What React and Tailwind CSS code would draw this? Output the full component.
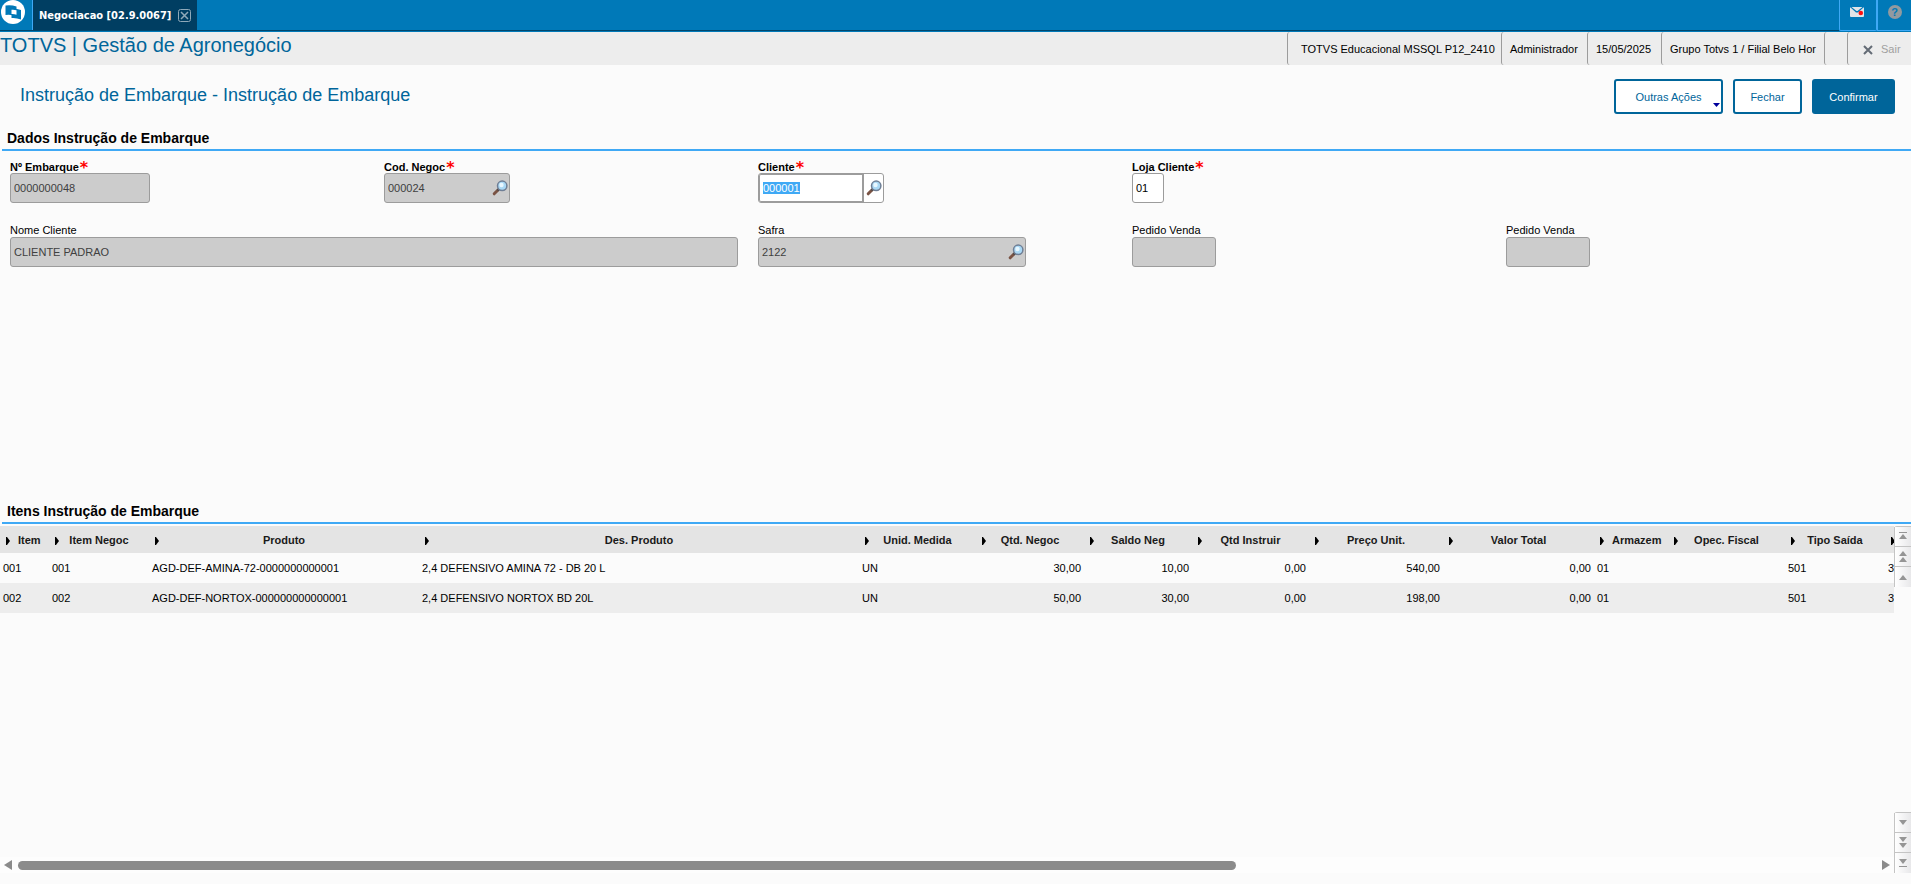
import React from 'react';
import clsx from 'clsx';

const columns = [
  { key: 'item', label: 'Item', width: 49, left: true },
  { key: 'itemNegoc', label: 'Item Negoc', width: 100 },
  { key: 'produto', label: 'Produto', width: 270 },
  { key: 'descricao', label: 'Des. Produto', width: 440 },
  { key: 'unidade', label: 'Unid. Medida', width: 117 },
  { key: 'qtdNegoc', label: 'Qtd. Negoc', width: 108, number: true },
  { key: 'saldo', label: 'Saldo Neg', width: 108, number: true },
  { key: 'qtdInstruir', label: 'Qtd Instruir', width: 117, number: true },
  { key: 'preco', label: 'Preço Unit.', width: 134, number: true },
  { key: 'total', label: 'Valor Total', width: 151, number: true },
  { key: 'armazem', label: 'Armazem', width: 74, left: true },
  { key: 'operacao', label: 'Opec. Fiscal', width: 117 },
  { key: 'tipoSaida', label: 'Tipo Saída', width: 100 },
  { key: 'extra', label: '', width: 60 }
];

const rows = [
  {
    item: '001',
    itemNegoc: '001',
    produto: 'AGD-DEF-AMINA-72-0000000000001',
    descricao: '2,4 DEFENSIVO AMINA 72 - DB 20 L',
    unidade: 'UN',
    qtdNegoc: '30,00',
    saldo: '10,00',
    qtdInstruir: '0,00',
    preco: '540,00',
    total: '0,00',
    armazem: '01',
    operacao: '',
    tipoSaida: '501',
    extra: '3'
  },
  {
    item: '002',
    itemNegoc: '002',
    produto: 'AGD-DEF-NORTOX-000000000000001',
    descricao: '2,4 DEFENSIVO NORTOX BD 20L',
    unidade: 'UN',
    qtdNegoc: '50,00',
    saldo: '30,00',
    qtdInstruir: '0,00',
    preco: '198,00',
    total: '0,00',
    armazem: '01',
    operacao: '',
    tipoSaida: '501',
    extra: '3'
  }
];

const Logo = () => (
  <svg width="24" height="24" viewBox="0 0 24 24" aria-hidden="true">
    <circle cx="12" cy="12" r="12" fill="#fff" />
    <path d="M4.500 5.500Q10 4.500 15.500 6.500V16.500Q10 14 4.500 15z" fill="#0079b8" />
    <path d="M10.500 8.500Q15 8 20 10V19.500Q15 17.500 10.500 18z" fill="#0079b8" />
    <path d="M10.500 9.800Q13 9.500 15.500 10.300V14.700Q13 13.800 10.500 14z" fill="#fff" />
  </svg>
);

const SearchIcon = () => (
  <svg width="16" height="16" viewBox="0 0 16 16" aria-hidden="true">
    <path d="M6.500 9.500 2.200 13.800" stroke="#7a5344" strokeWidth="3" strokeLinecap="round" />
    <path d="M7 9 5.500 10.500" stroke="#4a4a4a" strokeWidth="2" />
    <circle cx="10.200" cy="5.800" r="4.700" fill="#a9d8f5" stroke="#6f7f96" strokeWidth="1.500" />
    <circle cx="9.500" cy="5" r="2.200" fill="#e8f7ff" />
  </svg>
);

const Required = () => (
  <span className="ml-px h-4 font-['DejaVu_Sans',sans-serif] text-base leading-4 text-[#ff0000]">*</span>
);

const Field = ({ id, label, value = '', required, disabled, search, width, className }) => (
  <div className={clsx('flex flex-col items-start pr-5', className)}>
    <label
      htmlFor={id}
      className={clsx(
        'flex h-[13px] items-center whitespace-nowrap',
        required && 'pt-[2px] font-bold'
      )}
    >
      {label}
      {required && <Required />}
    </label>
    <div
      className={clsx(
        'flex h-[30px] items-center rounded-[3px] border border-[#9c9c9c]',
        disabled ? 'bg-[#cccccc]' : 'bg-white',
        width
      )}
    >
      <input
        id={id}
        type="text"
        defaultValue={value}
        readOnly={disabled}
        className={clsx(
          'h-full w-full min-w-0 bg-transparent px-[3px] outline-none',
          disabled ? 'text-[#404040]' : 'text-black'
        )}
      />
      {search && (
        <button type="button" aria-label={`Pesquisar ${label}`} className="shrink-0 pr-px">
          <SearchIcon />
        </button>
      )}
    </div>
  </div>
);

// The customer code has the focus, with its whole value selected
const ClienteField = () => {
  const input = React.useRef(null);

  React.useEffect(() => {
    input.current.focus();
    input.current.select();
  }, []);

  return (
    <div className="flex flex-col items-start pr-5">
      <label htmlFor="cliente" className="flex h-[13px] items-center pt-[2px] font-bold">
        Cliente
        <Required />
      </label>
      <div className="flex h-[30px] w-[126px] items-center rounded-[3px] border border-[#9c9c9c] bg-white">
        <input
          id="cliente"
          ref={input}
          type="text"
          defaultValue="000001"
          className="h-full w-[105px] rounded-l-[2px] border border-r-2 border-[#9c9c9c] px-[3px] outline-none selection:bg-[#3fa9f5] selection:text-white"
        />
        <button type="button" aria-label="Pesquisar Cliente" className="flex flex-1 justify-center">
          <SearchIcon />
        </button>
      </div>
    </div>
  );
};

const SectionTitle = ({ children }) => (
  <h2 className="ml-[2px] h-[25px] border-b-2 border-[#3fa9f5] pl-[5px] text-sm leading-[25px] font-bold text-black">
    {children}
  </h2>
);

const scrollIcons = {
  first: ['M3 2h8v1H3z', 'M7 4l4 5H3z'],
  pageUp: ['M7 1l4 5H3z', 'M7 7l4 5H3z'],
  up: ['M7 5l4 5H3z'],
  down: ['M7 9l4-5H3z'],
  pageDown: ['M7 6l4-5H3z', 'M7 12l4-5H3z'],
  last: ['M7 8l4-5H3z', 'M3 10h8v1H3z']
};

const ScrollButton = ({ icon, label }) => (
  <button
    type="button"
    aria-label={label}
    className="flex h-5 items-center justify-center border-b border-l border-[#c4c4c4] bg-linear-to-r from-white to-[#e8e8ea] last:border-b-0"
  >
    <svg width="14" height="14" viewBox="0 0 14 14" fill="#959595">
      {scrollIcons[icon].map((d) => (
        <path key={d} d={d} />
      ))}
    </svg>
  </button>
);

const ItemsTable = () => (
  <table className="w-max table-fixed border-collapse">
    <colgroup>
      {columns.map((col) => (
        <col key={col.key} style={{ width: col.width }} />
      ))}
    </colgroup>
    <thead>
      <tr className="h-[27px] bg-[#e4e4e4] text-[#1a1a1a]">
        {columns.map((col) => (
          <th key={col.key} className="p-0 font-bold">
            <div className={clsx('flex items-center pt-[2px] pl-[6px]', !col.left && 'pr-[18px]')}>
              <svg width="4" height="8" viewBox="0 0 4 8" className="shrink-0">
                <path d="M0 0h1l3 4-3 4H0z" fill="#000" />
              </svg>
              <span className={clsx('flex-1 pl-2 whitespace-nowrap', col.left && 'text-left')}>
                {col.label}
              </span>
            </div>
          </th>
        ))}
      </tr>
    </thead>
    <tbody>
      {rows.map((row) => (
        <tr key={row.item} className="h-[30px] even:bg-[#ededed]">
          {columns.map((col) => (
            <td
              key={col.key}
              className={clsx('px-[3px] py-0 whitespace-nowrap', col.number && 'text-right')}
            >
              {row[col.key]}
            </td>
          ))}
        </tr>
      ))}
    </tbody>
  </table>
);

const TopBar = () => (
  <header className="flex h-8 justify-between border-b border-[#0079b8] bg-[#0079b8]">
    <div className="flex h-[31px] flex-1 border-b border-[#00466c]">
      <a href="#inicio" aria-label="Início" className="w-[33px] border-r border-[#3fa9f5] pl-px">
        <Logo />
      </a>
      <div className="flex w-[164px] items-center gap-[7px] bg-[#003e62] pl-[6px] font-['DejaVu_Sans_Condensed','DejaVu_Sans',sans-serif] text-[11px] font-bold text-white">
        <span className="whitespace-nowrap">Negociacao [02.9.0067]</span>
        <button type="button" aria-label="Fechar aba">
          <svg width="13" height="13" viewBox="0 0 13 13" fill="none" stroke="#8fa9b9">
            <rect x="0.500" y="0.500" width="12" height="12" rx="2" />
            <path d="M3 3l7 7M10 3l-7 7" strokeWidth="1.500" />
          </svg>
        </button>
      </div>
    </div>
    <button
      type="button"
      aria-label="Mensagens"
      className="flex h-[31px] w-[38px] items-start justify-center rounded-b-[2px] border border-t-0 border-[#3fa9f5] pt-[7px] pr-[2px]"
    >
      <svg width="14" height="10" viewBox="0 0 14 10">
        <rect width="14" height="10" rx="1" fill="#e0e4e8" />
        <path d="M0 0h14L8 5.500H6z" fill="#0079b8" />
        <path d="M1.500 0h11L7.500 4h-1z" fill="#e0e4e8" />
        <circle cx="10.800" cy="6" r="2.300" fill="#ff1010" />
      </svg>
    </button>
    <button
      type="button"
      aria-label="Ajuda"
      className="flex h-[31px] w-[34px] items-start justify-center border-b border-l border-[#3fa9f5] pt-[5px]"
    >
      <span className="flex size-[14px] items-center justify-center rounded-full bg-[#929a9f] text-[11px] leading-none font-bold text-[#0079b8]">
        ?
      </span>
    </button>
  </header>
);

const InfoItem = ({ children, className }) => (
  <li
    className={clsx(
      'flex items-center rounded-l-[3px] border-l border-[#9c9c9c] pt-[2px]',
      className
    )}
  >
    {children}
  </li>
);

const InfoBar = () => (
  <div className="flex h-[33px] justify-between bg-[#ededed]">
    <h1 className="text-xl leading-[26px] whitespace-nowrap text-[#00659a]">
      TOTVS | Gestão de Agronegócio
    </h1>
    <ul className="flex whitespace-nowrap text-black">
      <InfoItem className="w-[214px] pl-[13px]">TOTVS Educacional MSSQL P12_2410</InfoItem>
      <InfoItem className="w-[86px] pl-2">Administrador</InfoItem>
      <InfoItem className="w-[74px] pl-2">15/05/2025</InfoItem>
      <InfoItem className="w-[163px] pl-2">Grupo Totvs 1 / Filial Belo Hor</InfoItem>
      <InfoItem className="w-[23px]" />
      <InfoItem className="w-16 pl-[15px]">
        <button type="button" className="flex items-center gap-2 text-[#a0a0a0]">
          <svg width="10" height="10" viewBox="0 0 10 10" stroke="#636b75" strokeWidth="2">
            <path d="M1 1l8 8M9 1L1 9" />
          </svg>
          Sair
        </button>
      </InfoItem>
    </ul>
  </div>
);

export default function App() {
  return (
    <div className="flex min-h-screen flex-col overflow-x-hidden bg-[#fbfbfb] font-['Liberation_Sans',Arial,sans-serif] text-[11px] leading-[13px] text-black">
      <TopBar />
      <InfoBar />

      <div className="flex items-start justify-between pt-[14px] pr-4 pl-5">
        <h2 className="pt-1 text-lg leading-6 text-[#00659a]">
          Instrução de Embarque - Instrução de Embarque
        </h2>
        <div className="flex gap-[10px] text-[#00659a]">
          <button
            type="button"
            className="relative h-[35px] w-[109px] rounded-[3px] border-2 border-[#00659a] bg-white pt-[2px]"
          >
            Outras Ações
            <svg width="7" height="4" viewBox="0 0 7 4" className="absolute right-px bottom-[5px]">
              <path d="M0 0h7L3.500 4z" fill="#00009c" />
            </svg>
          </button>
          <button
            type="button"
            className="h-[35px] w-[69px] rounded-[3px] border-2 border-[#00659a] bg-white pt-[2px]"
          >
            Fechar
          </button>
          <button
            type="button"
            className="h-[35px] w-[83px] rounded-[3px] bg-[#00659a] pt-[2px] text-white"
          >
            Confirmar
          </button>
        </div>
      </div>

      <section className="min-h-[373px] pt-3">
        <SectionTitle>Dados Instrução de Embarque</SectionTitle>
        <form className="grid grid-cols-5 gap-y-[21px] pt-[9px] pr-[31px] pl-[10px]">
          <Field id="embarque" label="Nº Embarque" value="0000000048" required disabled width="w-[140px]" />
          <Field id="negoc" label="Cod. Negoc" value="000024" required disabled search width="w-[126px]" />
          <ClienteField />
          <Field
            id="loja"
            label="Loja Cliente"
            value="01"
            required
            width="w-[32px]"
            className="col-span-2"
          />
          <Field
            id="nome"
            label="Nome Cliente"
            value="CLIENTE PADRAO"
            disabled
            width="w-full"
            className="col-span-2"
          />
          <Field id="safra" label="Safra" value="2122" disabled search width="w-[268px]" />
          <Field id="pedido" label="Pedido Venda" disabled width="w-[84px]" />
          <Field id="pedidoItem" label="Pedido Venda" disabled width="w-[84px]" />
        </form>
      </section>

      <section className="flex flex-1 flex-col pt-3 pb-[11px]">
        <SectionTitle>Itens Instrução de Embarque</SectionTitle>
        <div className="mt-[2px] flex flex-1">
          <div className="flex min-w-0 flex-1 flex-col justify-between">
            <div className="overflow-hidden">
              <ItemsTable />
            </div>
            <div className="flex h-4 items-center bg-[#fdfdfd] px-1">
              <svg width="8" height="10" viewBox="0 0 8 10">
                <path d="M8 0v10L0 5z" fill="#8b8b8b" />
              </svg>
              <div className="mx-[6px] flex-1">
                <div className="h-[9px] w-[calc(65%+10px)] rounded-full bg-[#8b8b8b]" />
              </div>
              <svg width="8" height="10" viewBox="0 0 8 10">
                <path d="M0 0v10l8-5z" fill="#8b8b8b" />
              </svg>
            </div>
          </div>
          <div className="flex w-[17px] flex-col justify-between">
            <div className="flex flex-col rounded-tl-[3px] border-t border-[#c4c4c4]">
              <ScrollButton icon="first" label="Primeiro" />
              <ScrollButton icon="pageUp" label="Página anterior" />
              <ScrollButton icon="up" label="Linha anterior" />
            </div>
            <div className="flex flex-col rounded-tl-[3px] border-t border-[#c4c4c4]">
              <ScrollButton icon="down" label="Próxima linha" />
              <ScrollButton icon="pageDown" label="Próxima página" />
              <ScrollButton icon="last" label="Último" />
            </div>
          </div>
        </div>
      </section>
    </div>
  );
}
